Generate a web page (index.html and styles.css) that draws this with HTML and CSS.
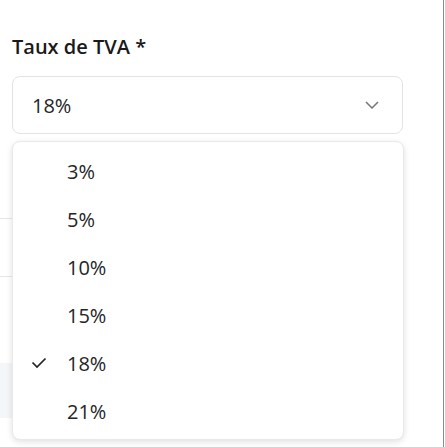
FILE: index.html
```html
<!DOCTYPE html>
<html lang="fr">
<head>
    <meta charset="UTF-8" />
    <title>Taux de TVA</title>
    <link rel="stylesheet" href="styles.css">
</head>
<body>
   <div class="page">
       <div class="field">
           <label class="field-label">Taux de TVA *</label>
           <div class="select">
               <span class="select-value">18%</span>
               <svg class="chevron" width="14" height="8" viewBox="0 0 14 8">
                   <polyline points="1,1 7,7 13,1" fill="none" stroke="#767676" stroke-width="1.5"/>
               </svg>
           </div>
       </div>
       <div class="rows">
           <div class="row row-first"></div>
           <div class="row row-line"></div>
           <div class="row row-tall"></div>
           <div class="row row-grey"></div>
       </div>
       <!-- liste ouverte -->
       <ul class="menu">
           <li class="menu-item">3%</li>
           <li class="menu-item">5%</li>
           <li class="menu-item">10%</li>
           <li class="menu-item">15%</li>
           <li class="menu-item selected">
               <svg class="check" width="16" height="12" viewBox="0 0 16 12">
                   <polyline points="1.5,5.5 6,10 14.5,1.5" fill="none" stroke="#242424" stroke-width="1.7"/>
               </svg>
               18%
           </li>
           <li class="menu-item">21%</li>
       </ul>
   </div>
</body>
</html>
```

FILE: styles.css
```css
*{
    padding:0;
    margin:0;
    list-style:none;
    box-sizing:border-box;
}
body{
    background:#fff;
    font-family:"Open Sans","Noto Sans",sans-serif;
    color:#242424;
}
.page{
    width: 444px;
    height: 447px;
    position:relative;
    border-right:1px solid #8a8a8a;
    overflow:hidden;
}
.field{
    padding:33px 0 0 12px;
    width: 403px;
}
.field-label{
    display:block;
    font-size:20px;
    line-height:27px;
    font-weight:600;
    color:#1a1a1a;
}
.select{
    margin-top:16px;
    height: 58px;
    border:1px solid #e3e3e3;
    border-radius:8px;
    display:flex;
    align-items:center;
    justify-content:space-between;
    padding:0 23px 0 19px;
}
.select-value{
    font-size:20px;
}
.rows{
    width: 403px;
    margin-top:27px;
}
.row{
    height: 58px;
}
.row-line,
.row-first{
    border-bottom:1px solid #e6e6e6;
}
.row-tall{
    height: 86px;
}
.row-grey{
    height: 55px;
    background:#f5f6f8;
}
.menu{
    position:absolute;
    top:141px;
    left:12px;
    width: 392px;
    height: 299px;
    background:#fff;
    border:1px solid #e9e9e9;
    border-radius:8px;
    box-shadow:0 2px 6px rgba(0,0,0,0.12);
    padding-top:6px;
}
.menu-item{
    height: 48px;
    line-height: 48px;
    font-size:20px;
    padding-left:54px;
    position:relative;
}
.check{
    position:absolute;
    left:18px;
    top:17px;
}
```
